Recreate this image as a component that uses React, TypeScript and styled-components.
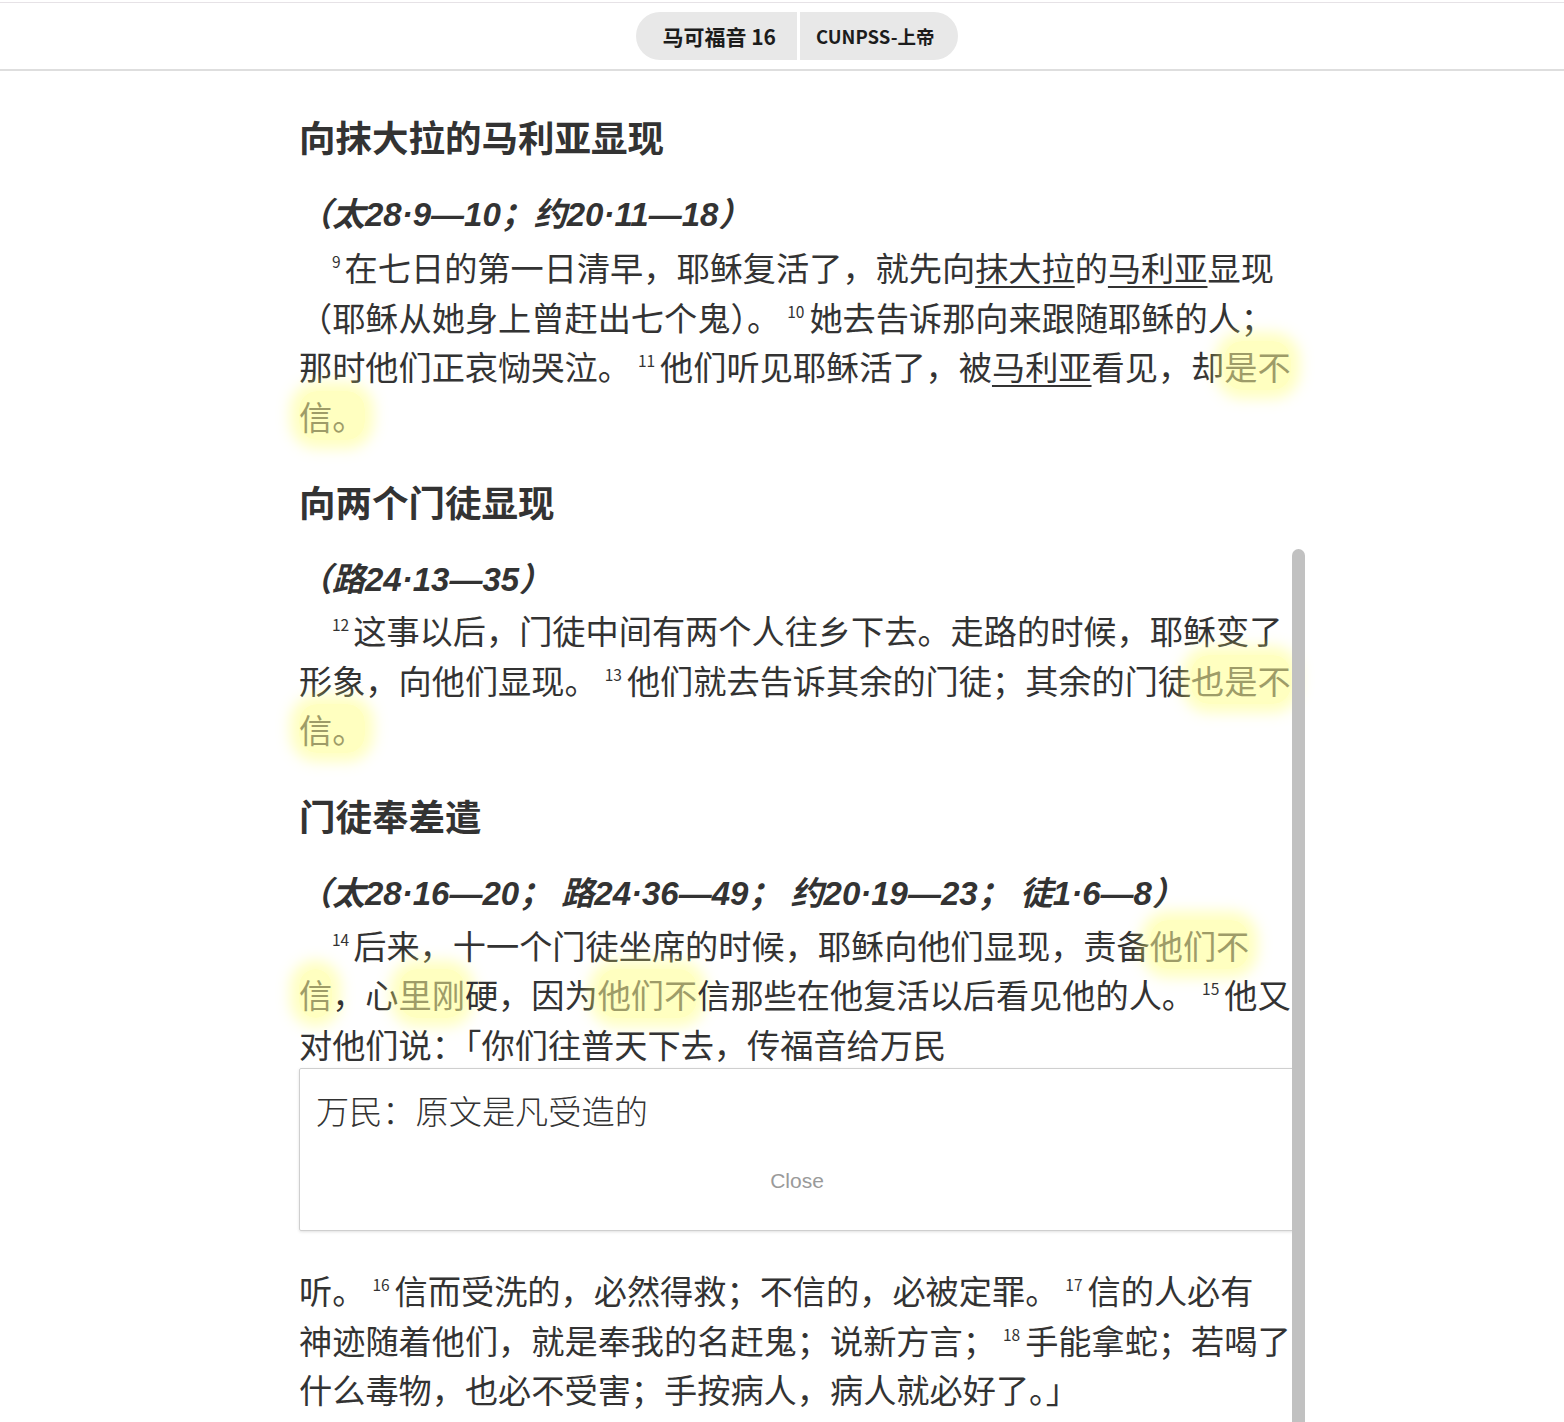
import React from "react";
import styled, { createGlobalStyle } from "styled-components";

const GlobalStyle = createGlobalStyle`
  html, body {
    margin: 0;
    padding: 0;
    background: #ffffff;
    overflow: hidden;
  }
  body {
    font-family: "Noto Sans CJK SC", "Noto Sans", sans-serif;
    color: #333333;
  }
`;

const Page = styled.div`
  min-height: 1422px;
`;

const TopBar = styled.header`
  margin-top: 2px;
  height: 66px;
  border-top: 1px solid #e6e2e6;
  border-bottom: 2px solid #dedede;
  display: flex;
  align-items: center;
  justify-content: center;
  padding-left: 30px;
`;

const Pill = styled.div`
  display: flex;
  height: 48px;
  border-radius: 24px;
  overflow: hidden;
  gap: 3px;
  background: #ffffff;
`;

const PillPart = styled.button<{ $bold?: boolean }>`
  border: none;
  background: #e8e8e8;
  color: #1c1c1c;
  font-family: "Noto Sans CJK SC", "Noto Sans", sans-serif;
  font-size: ${(p) => (p.$bold ? "21px" : "18.5px")};
  font-weight: ${(p) => (p.$bold ? 700 : 600)};
  padding: ${(p) => (p.$bold ? "0 21px 0 26px" : "0 23px 0 16px")};
  cursor: pointer;
`;

const Main = styled.main`
  padding: 41px 0 0 30px;
  display: flex;
  justify-content: center;
`;

const Column = styled.div`
  width: 996px;
`;

const Heading = styled.h2<{ $first?: boolean }>`
  margin: ${(p) => (p.$first ? "0" : "37px 0 0")};
  font-size: 36.5px;
  line-height: 50px;
  font-weight: 700;
  color: #333333;
`;

const Ref = styled.h3`
  margin: 28px 0 0;
  font-family: "Liberation Sans", "Noto Sans CJK SC", sans-serif;
  font-size: 33px;
  line-height: 50px;
  font-weight: 700;
  font-style: italic;
  color: #333333;
`;

const Para = styled.p<{ $gap?: number; $indent?: boolean }>`
  margin: ${(p) => p.$gap ?? 1}px 0 0;
  font-size: 33.2px;
  line-height: 49.5px;
  text-indent: ${(p) => (p.$indent === false ? "0" : "33px")};
  color: #333333;
`;

const Verse = styled.sup<{ $first?: boolean }>`
  font-size: 15.5px;
  line-height: 0;
  vertical-align: 13px;
  margin: ${(p) => (p.$first ? "0 4px 0 0" : "0 5px 0 7px")};
`;

const Name = styled.span`
  text-decoration: underline;
  text-decoration-thickness: 1.5px;
  text-underline-offset: 5px;
`;

const Word = styled.span`
  white-space: nowrap;
`;

const Mark = styled.span`
  color: #9e9c68;
  background: rgba(255, 255, 130, 0.5);
  border-radius: 18px;
  box-shadow: 0 0 14px 9px rgba(255, 255, 120, 0.45);
  -webkit-box-decoration-break: clone;
  box-decoration-break: clone;
`;

const Footnote = styled.div`
  border: 1px solid #cfcfcf;
  border-radius: 2px;
  box-shadow: 0 1px 3px rgba(0, 0, 0, 0.12);
  padding: 16px 16px 33px;
  display: flex;
  flex-direction: column;
`;

const FootText = styled.div`
  font-size: 33.2px;
  line-height: 50px;
  font-weight: 300;
  color: #333333;
`;

const CloseButton = styled.button`
  margin-top: 30px;
  align-self: center;
  border: none;
  background: none;
  font-family: "Liberation Sans", "Noto Sans", sans-serif;
  font-size: 21px;
  line-height: 30px;
  color: #9a9a9a;
  cursor: pointer;
`;

const ScrollThumb = styled.div`
  position: fixed;
  top: 549px;
  bottom: -10px;
  left: 1292px;
  width: 13px;
  border-radius: 7px;
  background: #c1c1c1;
`;

export default function App() {
  return (
    <Page>
      <GlobalStyle />
      <TopBar>
        <Pill>
          <PillPart $bold>马可福音 16</PillPart>
          <PillPart>CUNPSS-上帝</PillPart>
        </Pill>
      </TopBar>
      <Main>
        <Column>
          <Heading $first>向抹大拉的马利亚显现</Heading>
          <Ref>（太28·9—10；约20·11—18）</Ref>
          <Para $gap={2}>
            <Verse $first>9</Verse>在七日的第一日清早，耶稣复活了，就先向
            <Name>抹大拉</Name>的<Name>马利亚</Name>显现（耶稣从她身上曾赶出七个鬼）。
            <Verse>10</Verse>她去告诉那向来跟随耶稣的人；那时他们正哀恸哭泣。
            <Verse>11</Verse>他们听见耶稣活了，被<Name>马利亚</Name>看见，却
            <Mark>是不信。</Mark>
          </Para>

          <Heading>向两个门徒显现</Heading>
          <Ref>（路24·13—35）</Ref>
          <Para $gap={0}>
            <Verse $first>12</Verse>这事以后，门徒中间有两个人往乡下去。走路的时候，耶稣变了形象，向他们显现。
            <Verse>13</Verse>他们就去告诉其余的门徒；其余的门徒<Mark>也是不信。</Mark>
          </Para>

          <Heading>门徒奉差遣</Heading>
          <Ref>（太28·16—20； 路24·36—49； 约20·19—23； 徒1·6—8）</Ref>
          <Para $gap={1}>
            <Verse $first>14</Verse>后来，十一个门徒坐席的时候，耶稣向他们显现，责备
            <Mark>他们不信</Mark>，心<Mark>里刚</Mark>硬，因为<Mark>他们不</Mark>信那些在他复活以后看见他的人。
            <Verse>15</Verse>他又对他们说：「你们往普天下去，传福音给万民
          </Para>
          <Footnote>
            <FootText>万民：原文是凡受造的</FootText>
            <CloseButton>Close</CloseButton>
          </Footnote>
          <Para $gap={34} $indent={false}>
            听。<Verse>16</Verse>信而受洗的，必然得救；不信的，必被定罪。
            <Verse>17</Verse>信的人必有<Word>神迹</Word>随着他们，就是奉我的名赶鬼；说新方言；
            <Verse>18</Verse>手能拿蛇；若喝了<Word>什么</Word>毒物，也必不受害；手按病人，病人就必好了。」
          </Para>
        </Column>
      </Main>
      <ScrollThumb />
    </Page>
  );
}
